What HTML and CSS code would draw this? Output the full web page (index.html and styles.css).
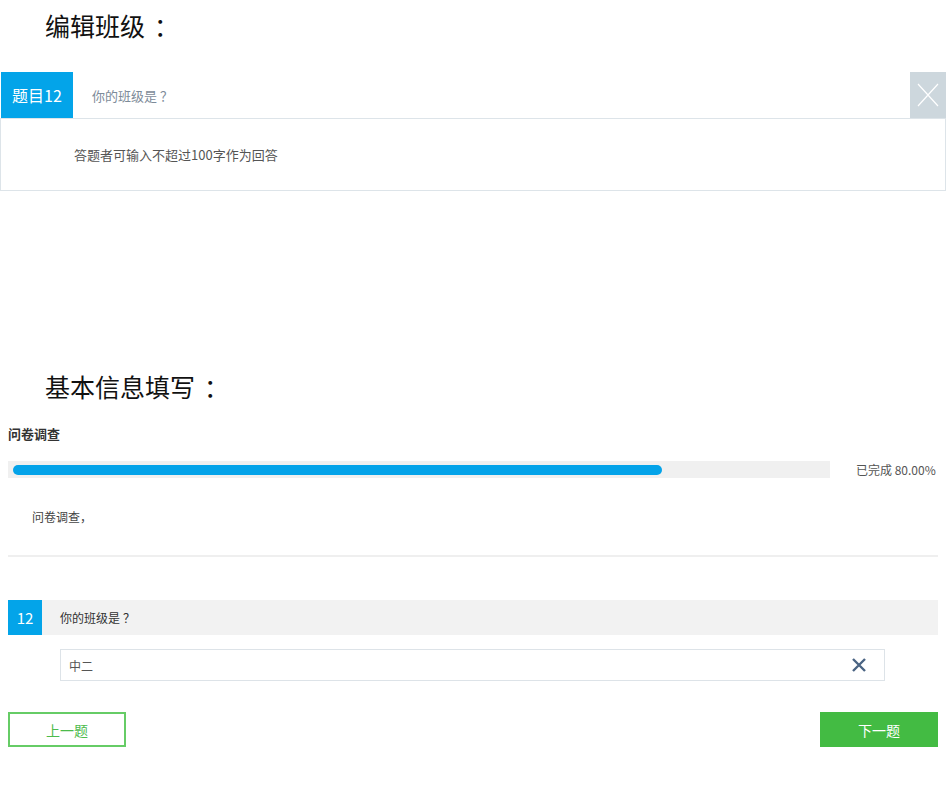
FILE: index.html
```html
<!DOCTYPE html>
<html lang="zh-CN">
  <head>
    <meta charset="UTF-8" />
    <meta name="viewport" content="width=device-width, initial-scale=1.0" />
    <title>编辑班级</title>
    <link rel="stylesheet" href="styles.css">
  </head>
  <body>
    <h2 class="heading heading-top">编辑班级<span class="colon">：</span></h2>
    <div class="edit-card">
      <div class="edit-head">
        <div class="edit-tab">题目12</div>
        <div class="edit-title">你的班级是<span class="qmark">？</span></div>
        <div class="edit-close">
          <svg width="24" height="30" viewBox="0 0 24 30">
            <path d="M2 4 L22 26 M22 4 L2 26" stroke="#ffffff" stroke-width="1.2" fill="none" />
          </svg>
        </div>
      </div>
      <div class="edit-body">答题者可输入不超过100字作为回答</div>
    </div>

    <h2 class="heading heading-second">基本信息填写<span class="colon">：</span></h2>
    <div class="survey">
      <div class="survey-title">问卷调查</div>
      <div class="progress-row">
        <div class="progress-track">
          <div class="progress-fill" style="width: 80%"></div>
        </div>
        <div class="progress-text">已完成 80.00%</div>
      </div>
      <div class="survey-desc">问卷调查，</div>
      <div class="divider"></div>

      <div class="question">
        <div class="question-num">12</div>
        <div class="question-text">你的班级是<span class="qmark">？</span></div>
      </div>
      <div class="answer">
        <span class="answer-value">中二</span>
        <svg class="answer-clear" width="16" height="16" viewBox="0 0 16 16">
          <path d="M2 2 L14 14 M14 2 L2 14" stroke="#4a6483" stroke-width="2.4" fill="none" />
        </svg>
      </div>

      <div class="nav">
        <button class="btn-prev">上一题</button>
        <button class="btn-next">下一题</button>
      </div>
    </div>
  </body>
</html>
```

FILE: styles.css
```css
body {
  margin: 0;
  background-color: #ffffff;
  font-family: "Noto Sans CJK SC", "Noto Sans", sans-serif;
  color: #333333;
  width: 947px;
}

.heading {
  margin: 0;
  padding-left: 45px;
  font-size: 25px;
  line-height: 30px;
  font-weight: normal;
  color: #111111;
}
.heading-top {
  padding-top: 10px;
}
.heading-second {
  margin-top: 180px;
}
.colon {
  margin-left: 9px;
}
.qmark {
  margin-left: 3px;
}

/* edit card */
.edit-card {
  margin-top: 32px;
  width: 946px;
}
.edit-head {
  display: flex;
  height: 46px;
  padding-left: 1px;
}
.edit-tab {
  width: 72px;
  background-color: #03a4e9;
  color: #ffffff;
  font-size: 16px;
  display: flex;
  align-items: center;
  justify-content: center;
}
.edit-title {
  flex: 1;
  padding-left: 19px;
  display: flex;
  align-items: center;
  font-size: 13px;
  color: #7d8b99;
}
.edit-close {
  width: 36px;
  background-color: #cdd7dd;
  display: flex;
  align-items: center;
  justify-content: center;
}
.edit-body {
  height: 71px;
  border: 1px solid #dde4e9;
  padding-left: 73px;
  display: flex;
  align-items: center;
  font-size: 13px;
  color: #555555;
}

/* survey */
.survey {
  padding: 0 9px 0 8px;
}
.survey-title {
  margin-top: 24px;
  font-size: 13px;
  line-height: 18px;
  font-weight: bold;
  color: #333333;
}
.progress-row {
  margin-top: 18px;
  display: flex;
  align-items: center;
}
.progress-track {
  width: 811px;
  height: 17px;
  padding: 0 6px 0 5px;
  background-color: #f0f0f0;
  display: flex;
  align-items: center;
}
.progress-fill {
  height: 10px;
  border-radius: 5px;
  background-color: #04a3e9;
}
.progress-text {
  margin-left: 26px;
  font-size: 12px;
  color: #555555;
}
.survey-desc {
  margin-top: 30px;
  padding-left: 24px;
  font-size: 12px;
  line-height: 18px;
  color: #444444;
}
.divider {
  margin-top: 29px;
  height: 2px;
  background-color: #efefef;
}

.question {
  margin-top: 43px;
  display: flex;
  height: 35px;
  background-color: #f2f2f2;
}
.question-num {
  width: 34px;
  background-color: #03a4e9;
  color: #ffffff;
  font-size: 15px;
  display: flex;
  align-items: center;
  justify-content: center;
}
.question-text {
  padding-left: 18px;
  display: flex;
  align-items: center;
  font-size: 12px;
  color: #333333;
}

.answer {
  margin: 14px 0 0 52px;
  width: 798px;
  height: 30px;
  border: 1px solid #dde3e8;
  padding: 0 17px 0 8px;
  display: flex;
  align-items: center;
  justify-content: space-between;
}
.answer-value {
  font-size: 12px;
  color: #555555;
}

.nav {
  margin-top: 31px;
  display: flex;
  justify-content: space-between;
}
button {
  width: 118px;
  height: 35px;
  font-family: "Noto Sans CJK SC", sans-serif;
  font-size: 14px;
  cursor: pointer;
}
.btn-prev {
  background-color: #ffffff;
  border: 2px solid #66cc66;
  color: #4cbb4c;
}
.btn-next {
  background-color: #43bb43;
  border: none;
  color: #ffffff;
}
```
